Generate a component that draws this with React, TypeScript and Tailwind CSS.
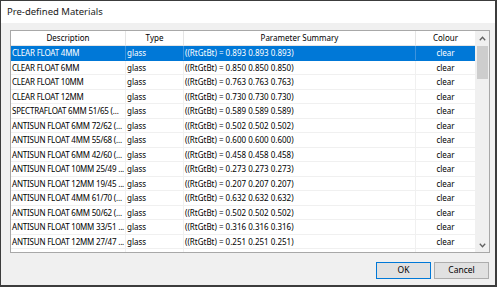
const MATERIALS = [
  { name: 'CLEAR FLOAT 4MM', value: '0.893' },
  { name: 'CLEAR FLOAT 6MM', value: '0.850' },
  { name: 'CLEAR FLOAT 10MM', value: '0.763' },
  { name: 'CLEAR FLOAT 12MM', value: '0.730' },
  { name: 'SPECTRAFLOAT 6MM 51/65 (...', value: '0.589' },
  { name: 'ANTISUN FLOAT 6MM 72/62 (...', value: '0.502' },
  { name: 'ANTISUN FLOAT 4MM 55/68 (...', value: '0.600' },
  { name: 'ANTISUN FLOAT 6MM 42/60 (...', value: '0.458' },
  { name: 'ANTISUN FLOAT 10MM 25/49 ...', value: '0.273' },
  { name: 'ANTISUN FLOAT 12MM 19/45 ...', value: '0.207' },
  { name: 'ANTISUN FLOAT 4MM 61/70 (...', value: '0.632' },
  { name: 'ANTISUN FLOAT 6MM 50/62 (...', value: '0.502' },
  { name: 'ANTISUN FLOAT 10MM 33/51 ...', value: '0.316' },
  { name: 'ANTISUN FLOAT 12MM 27/47 ...', value: '0.251' },
  { name: 'ANTISUN FLOAT 6MM 51/61 (...', value: '0.760' },
]

const FONT = { fontFamily: '"Segoe UI", "Noto Sans", sans-serif' }

function Chevron({ down }: { down?: boolean }) {
  return (
    <svg width="7" height="5" viewBox="0 0 7 5" className={down ? 'rotate-180' : ''}>
      <path d="M0.8 4.2 L3.5 1.3 L6.2 4.2" fill="none" stroke="#606060" strokeWidth="1.3" />
    </svg>
  )
}

export default function App() {
  return (
    <div className="h-[288px] w-[499px] overflow-hidden bg-white text-black" style={FONT}>
      <div className="flex h-[287px] w-[497px] flex-col border-b-2 border-l border-r-2 border-t border-[#3c3c3c]">
        <div className="flex h-[22px] items-center bg-white pl-[6px] text-[9.5px] text-[#1a1a1a]">
          Pre-defined Materials
        </div>

        <div className="flex flex-1 flex-col bg-[#f0f0f0] pb-[6px] pl-[9px] pr-[5px] pt-[7px]">
          <div className="flex h-[223px] border border-[#a8a8a8] bg-white">
            <div className="flex min-w-0 flex-1 flex-col overflow-hidden">
              <div className="flex h-[15px] shrink-0 border-b border-[#e5e5e5] text-[8px] leading-[14px]">
                <div className="w-[115px] border-r border-[#e5e5e5] text-center">Description</div>
                <div className="w-[58px] border-r border-[#e5e5e5] text-center">Type</div>
                <div className="w-[232px] border-r border-[#e5e5e5] text-center">Parameter Summary</div>
                <div className="flex-1 text-center">Colour</div>
              </div>

              {MATERIALS.map((m, i) => {
                const selected = i === 0
                const line = selected ? 'border-[#3d93dd]' : 'border-[#f0f0f0]'
                return (
                  <div
                    key={i}
                    className={`flex h-[14.5px] shrink-0 border-b text-[8px] leading-[13.5px] ${
                      selected ? 'border-[#0078d7] bg-[#0078d7] text-white' : 'border-[#f0f0f0]'
                    }`}
                  >
                    <div className={`w-[115px] overflow-hidden whitespace-nowrap border-r pl-[1px] tracking-[-0.2px] ${line}`}>
                      {m.name}
                    </div>
                    <div className={`w-[58px] border-r pl-[1px] ${line}`}>glass</div>
                    <div className={`w-[232px] whitespace-nowrap border-r pl-[1px] ${line}`}>
                      ((RtGtBt) = {m.value} {m.value} {m.value})
                    </div>
                    <div className="flex-1 text-center">clear</div>
                  </div>
                )
              })}
            </div>

            <div className="flex w-[14px] shrink-0 flex-col items-center bg-[#f0f0f0]">
              <div className="flex h-[14px] items-center justify-center">
                <Chevron />
              </div>
              <div className="mt-px h-[33px] w-[11px] bg-[#cdcdcd]" />
              <div className="flex-1" />
              <div className="flex h-[14px] items-center justify-center">
                <Chevron down />
              </div>
            </div>
          </div>

          <div className="mt-[9px] flex justify-end gap-[3px] pr-px text-[8.5px]">
            <button className="h-[17px] w-[55px] border border-[#0078d7] bg-[#e1e1e1]">OK</button>
            <button className="h-[17px] w-[55px] border border-[#adadad] bg-[#e1e1e1]">Cancel</button>
          </div>
        </div>
      </div>
    </div>
  )
}
